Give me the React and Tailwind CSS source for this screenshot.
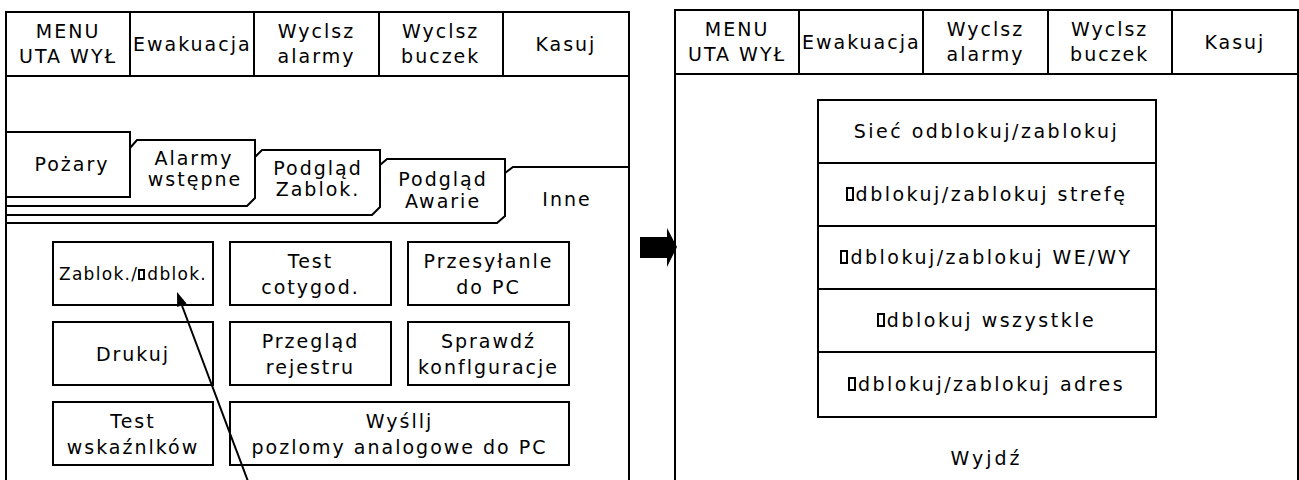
const HEADER = [["MENU", "UTA WYŁ"], ["Ewakuacja"], ["Wyclsz", "alarmy"], ["Wyclsz", "buczek"], ["Kasuj"]];

const BUTTONS = [
  { lines: ["Zablok./▯dblok."], small: true },
  { lines: ["Test", "cotygod."] },
  { lines: ["Przesyłanle", "do PC"] },
  { lines: ["Drukuj"] },
  { lines: ["Przegląd", "rejestru"] },
  { lines: ["Sprawdź", "konflguracje"] },
  { lines: ["Test", "wskaźnlków"] },
  { lines: ["Wyśllj", "pozlomy analogowe do PC"], wide: true },
];

const MENU = [
  "Sieć odblokuj/zablokuj",
  "▯dblokuj/zablokuj strefę",
  "▯dblokuj/zablokuj WE/WY",
  "▯dblokuj wszystkle",
  "▯dblokuj/zablokuj adres",
];

// "O" którego czcionka CAD nie miała - rysowane jako pusty prostokąt
function Label({ text, small }) {
  const parts = text.split("▯");
  return (
    <span className="whitespace-nowrap">
      {parts.map((p, i) => (
        <span key={i}>
          {i > 0 && (
            <span
              className={`mr-[2px] inline-block overflow-hidden border-2 border-black align-baseline text-[1px] leading-none text-transparent ${small ? "h-[11px] w-[7px]" : "h-[14px] w-[8px]"}`}
            >
              O
            </span>
          )}
          {p}
        </span>
      ))}
    </span>
  );
}

// pasek przycisków u góry panelu, wspólny dla obu ekranów
function Header() {
  return (
    <div className="grid h-[64px] grid-cols-5 border-b-2 border-black">
      {HEADER.map((lines, i) => (
        <div
          key={i}
          className={`flex flex-col items-center justify-center leading-[25px] ${i < 4 ? "border-r-2 border-black" : ""}`}
        >
          {lines.map((l) => (
            <span key={l} className="whitespace-nowrap">{l}</span>
          ))}
        </div>
      ))}
    </div>
  );
}

// zakładki rysowane jak w CAD-zie (współrzędne strony w viewBox)
function Tabs() {
  return (
    <svg width="621" height="164" viewBox="7 77 621 164" className="block" fill="none" stroke="black" strokeWidth="2">
      <path d="M7 132H130V197H7" />
      <path d="M130 148L137 140H255V198L247 206H7" />
      <path d="M255 157L262 150H380V207L372 215H7" />
      <path d="M380 165L387 159H505V216L497 223H7" />
      <path d="M505 173L513 167H628" />
      <g fill="black" stroke="none" fontSize="19" letterSpacing="2" textAnchor="middle">
        <text x="72" y="171">Pożary</text>
        <text x="194" y="165">Alarmy</text>
        <text x="195" y="186">wstępne</text>
        <text x="318" y="175">Podgląd</text>
        <text x="318" y="196">Zablok.</text>
        <text x="443" y="186">Podgląd</text>
        <text x="443" y="208">Awarie</text>
        <text x="567" y="206">Inne</text>
      </g>
    </svg>
  );
}

export default function App() {
  return (
    <div className="relative h-[480px] w-[1299px] overflow-hidden bg-white font-['DejaVu_Sans',sans-serif] text-[19px] tracking-[2px] text-black">
      <div className="flex items-start">
        {/* lewy ekran */}
        <div className="ml-[5px] mt-[11px] h-[520px] w-[625px] shrink-0 border-2 border-black">
          <Header />
          <Tabs />
          <div className="ml-[45px] grid w-[518px] grid-cols-[162px_163px_163px] auto-rows-[65px] gap-[15px]">
            {BUTTONS.map((b, i) => (
              <div
                key={i}
                className={`flex flex-col items-center justify-center border-2 border-black leading-[26px] ${b.wide ? "col-span-2" : ""} ${b.small ? "text-[17px] tracking-[1.3px]" : ""}`}
              >
                {b.lines.map((l) => (
                  <Label key={l} text={l} small={b.small} />
                ))}
              </div>
            ))}
          </div>
        </div>

        <div className="w-[44px] shrink-0 pt-[228px]">
          <svg width="37" height="40" viewBox="640 228 37 40" className="ml-[10px] block overflow-visible">
            <polygon points="640,237 667,237 667,228 677,247 667,267 667,258 640,258" fill="black" />
          </svg>
        </div>

        {/* prawy ekran */}
        <div className="mt-[9px] h-[520px] w-[625px] shrink-0 border-2 border-black">
          <Header />
          <div className="mx-auto mt-[24px] w-[340px] border-2 border-black tracking-[2.5px]">
            {MENU.map((m, i) => (
              <div
                key={m}
                className={`flex h-[63px] items-center justify-center ${i < MENU.length - 1 ? "border-b-2 border-black" : ""}`}
              >
                <Label text={m} />
              </div>
            ))}
          </div>
          <div className="mt-[28px] text-center leading-[25px] tracking-[3px]">Wyjdź</div>
        </div>
      </div>

      <svg className="pointer-events-none absolute left-0 top-0" width="1299" height="480">
        <line x1="181" y1="303" x2="252" y2="492" stroke="black" strokeWidth="2" />
        <polygon points="177,292 186.6,303.4 177.2,306.9" fill="black" />
      </svg>
    </div>
  );
}
